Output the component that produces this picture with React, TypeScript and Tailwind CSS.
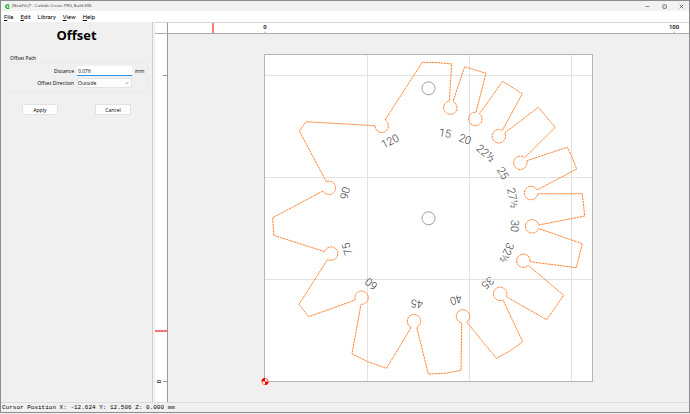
import { useState } from "react";

const MENU = [
  { key: "F", rest: "ile" },
  { key: "E", rest: "dit" },
  { key: "", rest: "Library" },
  { key: "V", rest: "iew" },
  { key: "H", rest: "elp" },
];

// outline of the toolpath, in canvas pixels
const OUTLINE = [
  "M385 120L422.3 62.3L438 62.6L451.7 64L449.3 101",
  "A6.7 6.7 0 1 0 453 101.5L464.7 66.7L486 73.3L476 112.3",
  "A6.7 6.7 0 1 0 479.5 113.7L502.7 81.3L522.3 93.7L502.3 130.5",
  "A6.7 6.7 0 1 0 504.7 133L538.3 107.3L555.2 127.3L524.7 157.7",
  "A6.7 6.7 0 1 0 526.7 160.7L567.3 147.3L572 157L576.7 169L537 190",
  "A6.7 6.7 0 1 0 537.7 193.7L582.3 193.7L584.7 216L538.7 225",
  "A6.7 6.7 0 1 0 538.5 228.5L582.3 243.7L576.3 267.7L530 261.7",
  "A6.7 6.7 0 1 0 528.3 265.3L563.7 295.3L546.7 319.7L506.3 296.7",
  "A6.7 6.7 0 1 0 503 300L522.7 341.7L510 351L496.3 358.3L466.7 322",
  "A6.7 6.7 0 1 0 461.7 323L461 370.3L445 373.3L428.3 374L416.7 327.3",
  "A6.7 6.7 0 1 0 411.3 327.3L386.5 368.3L367.7 361.7L352 353.7L361 304.3",
  "A6.7 6.7 0 1 0 355.3 300L308.7 316.7L299 304.3L327.7 259.3",
  "A6.7 6.7 0 1 0 324.7 251.7L273.7 235.3L272.7 217.7L323 191",
  "A6.7 6.7 0 1 0 326.3 181.7L299.3 131L306.3 121.7L375 125.7",
  "A6.7 6.7 0 1 0 385 120Z",
].join("");

const ANGLES = [
  { text: "120", x: 390, y: 141, turn: -27 },
  { text: "15", x: 445, y: 133, turn: 8 },
  { text: "20", x: 465, y: 139, turn: 20 },
  { text: "22½", x: 486, y: 153, turn: 40 },
  { text: "25", x: 503, y: 173, turn: 58 },
  { text: "27½", x: 513, y: 198, turn: 79 },
  { text: "30", x: 515, y: 226, turn: 93 },
  { text: "32½", x: 507, y: 253, turn: 112 },
  { text: "35", x: 488, y: 283, turn: 138 },
  { text: "40", x: 456, y: 300, turn: 164 },
  { text: "45", x: 417, y: 304, turn: 186 },
  { text: "60", x: 371, y: 284, turn: 217 },
  { text: "75", x: 347, y: 249, turn: 253 },
  { text: "90", x: 345, y: 193, turn: 285 },
];

function TitleBar() {
  return (
    <header className="flex h-[10px] shrink-0 items-center bg-[#f2f2f3] pl-1 text-[#333]">
      <svg viewBox="0 0 8 8" className="mr-[2px] size-[5px]" aria-hidden="true">
        <path
          d="M7 1.2H3.2L1.2 3v2.2l2 1.7H7M4.5 4H7"
          fill="none"
          stroke="#17b32b"
          strokeWidth="2"
        />
      </svg>
      <h1 className="text-[4px] leading-[8px] font-medium whitespace-nowrap">
        [NewFile]* - Carbide Create PRO, Build 838
      </h1>
      <div className="ml-auto flex gap-3 pr-[5px]">
        <button aria-label="Minimize" className="size-[5px]">
          <svg viewBox="0 0 5 5" className="size-[5px]">
            <path d="M.5 2.5h4" stroke="#666" strokeWidth=".7" />
          </svg>
        </button>
        <button aria-label="Maximize" className="size-[5px]">
          <svg viewBox="0 0 5 5" className="size-[5px]">
            <rect x=".9" y=".9" width="3.4" height="3.4" rx=".5" fill="none" stroke="#555" strokeWidth=".8" />
          </svg>
        </button>
        <button aria-label="Close" className="size-[5px]">
          <svg viewBox="0 0 5 5" className="size-[5px]">
            <path d="M.7.7l3.6 3.6M4.3.7L.7 4.3" stroke="#444" strokeWidth=".7" />
          </svg>
        </button>
      </div>
    </header>
  );
}

function OffsetPanel() {
  const [distance, setDistance] = useState("0.076");
  const [direction, setDirection] = useState("Outside");

  return (
    <aside className="flex w-[152px] shrink-0 flex-col border-r border-[#cfcfcf] bg-[#f0f0f0]">
      <h2 className="mt-1 text-center text-[13px] leading-[18px] font-bold">Offset</h2>
      <fieldset className="mx-1 mt-[10px]">
        <legend className="ml-[5px] text-[5px] leading-[8px] font-medium">Offset Path</legend>
        <div className="grid grid-cols-[68px_55px_1fr] items-center gap-x-[3px] gap-y-[2px] border border-[#eaeaea] pt-[3px] pb-1 text-[5px] leading-[8px] font-medium">
          <label htmlFor="distance" className="text-right">
            Distance
          </label>
          <input
            id="distance"
            value={distance}
            onChange={(e) => setDistance(e.target.value)}
            className="h-[10px] w-full border-b border-[#2f8fe0] bg-white pl-px outline-none"
          />
          <span>mm</span>
          <label htmlFor="direction" className="text-right">
            Offset Direction
          </label>
          <div className="relative">
            <select
              id="direction"
              value={direction}
              onChange={(e) => setDirection(e.target.value)}
              className="block h-[10px] w-full appearance-none rounded-[1px] border border-[#e4e4e4] bg-[#fcfcfc] outline-none"
            >
              <option>Outside</option>
              <option>Inside</option>
            </select>
            <svg viewBox="0 0 4 4" className="pointer-events-none absolute top-[3px] right-[3px] size-1">
              <path d="M.5 1.3L2 2.7l1.5-1.4" fill="none" stroke="#777" strokeWidth=".6" />
            </svg>
          </div>
        </div>
      </fieldset>
      <div className="mt-[11px] flex justify-between px-[21px] text-[5px] leading-[8px] font-medium">
        <button className="h-[11px] w-9 rounded-[1px] border border-[#e2e2e2] bg-[#fdfdfd]">Apply</button>
        <button className="h-[11px] w-9 rounded-[1px] border border-[#e2e2e2] bg-[#fdfdfd]">Cancel</button>
      </div>
    </aside>
  );
}

function TopRuler() {
  return (
    <svg className="h-full w-full" aria-label="Horizontal ruler">
      <rect x="44" width="2" height="12" fill="#ff7b7b" />
      <path d="M97 8.5v3M506 8.5v3" stroke="#aaa" />
      <g className="font-['Roboto']" fontSize="6" fontWeight="500" textAnchor="middle" fill="#000">
        <text x="97" y="6">0</text>
        <text x="506" y="6">100</text>
      </g>
    </svg>
  );
}

function LeftRuler() {
  return (
    <svg className="h-full w-full" aria-label="Vertical ruler">
      <path d="M8 41.5h4M8 347.5h4" stroke="#999" />
      <rect y="296" width="12" height="2" fill="#ff7070" />
      <text
        className="font-['Roboto']"
        transform="translate(6 347.5) rotate(-90)"
        fontSize="6"
        fontWeight="500"
        textAnchor="middle"
        fill="#000"
      >
        0
      </text>
    </svg>
  );
}

function Workspace() {
  return (
    <svg className="h-full w-full" role="img" aria-label="Angle gauge design">
      <g transform="translate(-168 -34)">
        <rect x="264.5" y="54.5" width="328" height="327" fill="#fff" stroke="#b5b5b5" />
        <path
          d="M367.5 55v326M469.5 55v326M571.5 55v326M265 75.5h327M265 177.5h327M265 279.5h327"
          stroke="#e2e2e2"
        />
        <g fill="none" stroke="#888" strokeWidth=".8">
          <circle cx="428.5" cy="88.3" r="6.5" />
          <circle cx="428.5" cy="218.3" r="6.5" />
        </g>
        <path d={OUTLINE} fill="none" stroke="#ff8534" strokeWidth="1" strokeDasharray="2.4 .6" />
        <g className="font-['Roboto']" fontSize="11" fontWeight="300" textAnchor="middle" fill="#333">
          {ANGLES.map((a) => (
            <text key={a.text} transform={`translate(${a.x} ${a.y}) rotate(${a.turn})`} y="4">
              {a.text}
            </text>
          ))}
        </g>
        <circle cx="265" cy="381.5" r="3.5" fill="#fff" />
        <path
          d="M265 381.5V378A3.5 3.5 0 0 0 261.5 381.5ZM265 381.5V385A3.5 3.5 0 0 0 268.5 381.5Z"
          fill="#f00"
        />
        <circle cx="265" cy="381.5" r="3.2" fill="none" stroke="#f00" strokeWidth=".6" />
      </g>
    </svg>
  );
}

export default function App() {
  return (
    <div className="flex h-screen flex-col bg-[#f0f0f0] pb-px font-['Open_Sans','Noto_Sans',sans-serif] text-black">
      <div className="flex min-h-0 flex-1 flex-col border border-[#8c8c90]">
        <TitleBar />
        <nav className="flex h-[11px] shrink-0 items-center gap-[7px] bg-white pl-[3px] font-['Roboto',sans-serif] text-[6px] leading-[8px]">
          {MENU.map((m) => (
            <button key={m.rest}>
              <u>{m.key}</u>
              {m.rest}
            </button>
          ))}
        </nav>
        <main className="flex min-h-0 flex-1 gap-[2px]">
          <OffsetPanel />
          <div className="grid min-w-0 flex-1 grid-cols-[13px_1fr] grid-rows-[12px_1fr]">
            <div className="border-t border-r border-b border-t-[#d5d5d5] border-r-[#999] border-b-[#aaa] bg-white" />
            <div className="border-t border-b border-t-[#d5d5d5] border-b-[#aaa] bg-white">
              <TopRuler />
            </div>
            <div className="border-r border-[#999] bg-white">
              <LeftRuler />
            </div>
            <div className="min-h-0 min-w-0">
              <Workspace />
            </div>
          </div>
        </main>
        <footer className="h-[10px] shrink-0 border-t border-[#ddd] pl-px font-['Liberation_Mono',monospace] text-[6px] leading-[9px] whitespace-nowrap">
          Cursor Position X: -12.624 Y: 12.506 Z: 0.000 mm
        </footer>
      </div>
    </div>
  );
}
